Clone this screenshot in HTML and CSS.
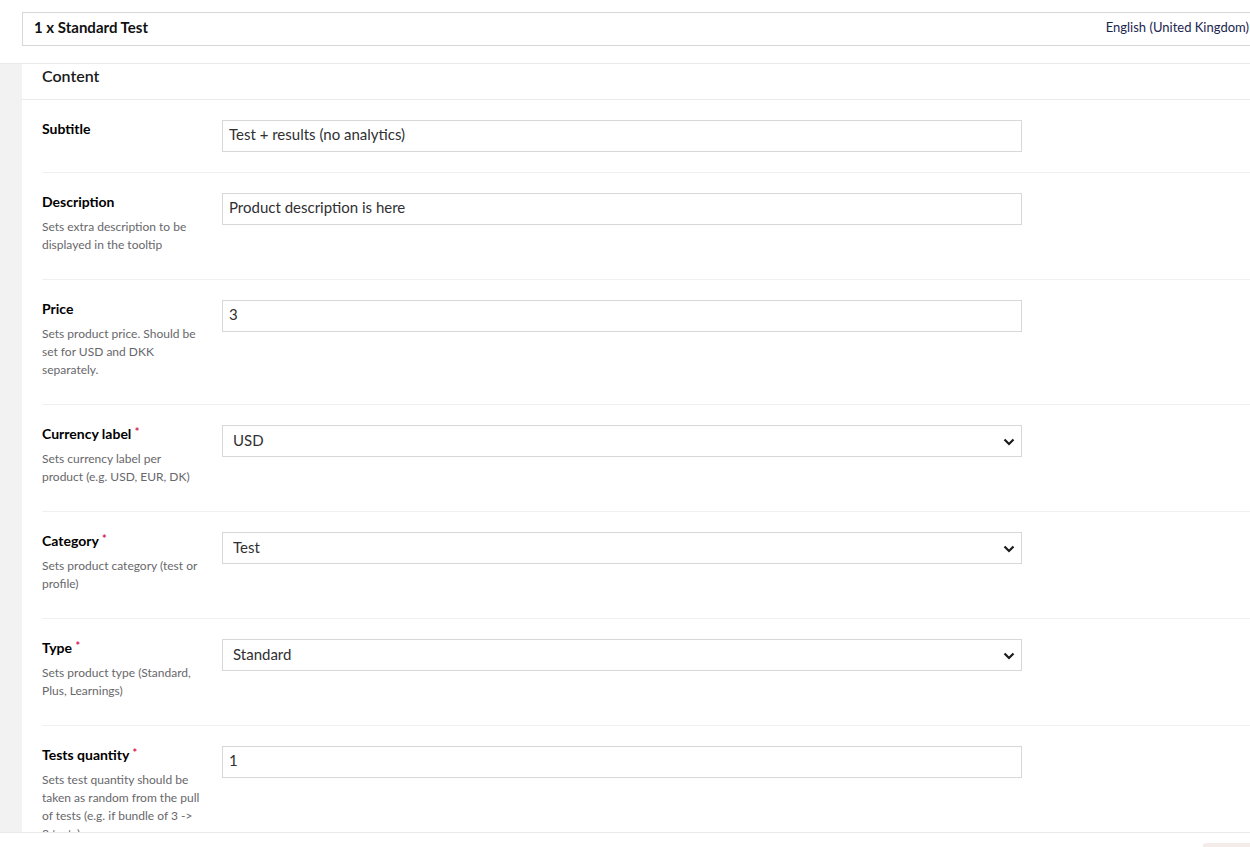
FILE: index.html
```html
<!DOCTYPE html>
<html lang="en">
<head>
    <meta charset="UTF-8">
    <meta name="viewport" content="width=device-width, initial-scale=1.0">
    <title>1 x Standard Test</title>
    <link rel="stylesheet" href="styles.css">
</head>
<body>

    <header class="editor-header">
        <div class="name-box">
            <span class="name">1 x Standard Test</span>
            <span class="culture">English (United Kingdom)</span>
        </div>
    </header>

    <div class="workspace">
        <div class="group-panel">
            <div class="group-title">Content</div>

            <div class="property">
                <div class="property-label">
                    <div class="label">Subtitle</div>
                </div>
                <div class="property-editor">
                    <input class="text-input" type="text" value="Test + results (no analytics)">
                </div>
            </div>

            <div class="property">
                <div class="property-label">
                    <div class="label">Description</div>
                    <div class="help">Sets extra description to be displayed in the tooltip</div>
                </div>
                <div class="property-editor">
                    <input class="text-input" type="text" value="Product description is here">
                </div>
            </div>

            <div class="property">
                <div class="property-label">
                    <div class="label">Price</div>
                    <div class="help">Sets product price. Should be set for USD and DKK separately.</div>
                </div>
                <div class="property-editor">
                    <input class="text-input" type="text" value="3">
                </div>
            </div>

            <div class="property">
                <div class="property-label">
                    <div class="label">Currency label <span class="required">*</span></div>
                    <div class="help">Sets currency label per product (e.g. USD, EUR, DK)</div>
                </div>
                <div class="property-editor">
                    <div class="select-wrap">
                        <select class="select-input">
                            <option>USD</option>
                            <option>DKK</option>
                        </select>
                        <svg class="chevron" width="12" height="8" viewBox="0 0 12 8"><path d="M1.5 1.5 L6 6 L10.5 1.5" fill="none" stroke="#1b1b1b" stroke-width="2.2"/></svg>
                    </div>
                </div>
            </div>

            <div class="property">
                <div class="property-label">
                    <div class="label">Category <span class="required">*</span></div>
                    <div class="help">Sets product category (test or profile)</div>
                </div>
                <div class="property-editor">
                    <div class="select-wrap">
                        <select class="select-input">
                            <option>Test</option>
                            <option>Profile</option>
                        </select>
                        <svg class="chevron" width="12" height="8" viewBox="0 0 12 8"><path d="M1.5 1.5 L6 6 L10.5 1.5" fill="none" stroke="#1b1b1b" stroke-width="2.2"/></svg>
                    </div>
                </div>
            </div>

            <div class="property">
                <div class="property-label">
                    <div class="label">Type <span class="required">*</span></div>
                    <div class="help">Sets product type (Standard, Plus, Learnings)</div>
                </div>
                <div class="property-editor">
                    <div class="select-wrap">
                        <select class="select-input">
                            <option>Standard</option>
                            <option>Plus</option>
                            <option>Learnings</option>
                        </select>
                        <svg class="chevron" width="12" height="8" viewBox="0 0 12 8"><path d="M1.5 1.5 L6 6 L10.5 1.5" fill="none" stroke="#1b1b1b" stroke-width="2.2"/></svg>
                    </div>
                </div>
            </div>

            <div class="property">
                <div class="property-label">
                    <div class="label">Tests quantity <span class="required">*</span></div>
                    <div class="help">Sets test quantity should be taken as random from the pull of tests (e.g. if bundle of 3 -&gt; 3 tests)</div>
                </div>
                <div class="property-editor">
                    <input class="text-input" type="text" value="1">
                </div>
            </div>
        </div>
    </div>

    <footer class="editor-footer">
        <button class="save-button">Save</button>
    </footer>

</body>
</html>
```

FILE: styles.css
```css
html, body {
    overflow: hidden;
}

body {
    margin: 0;
    width: 1250px;
    height: 847px;
    font-family: Lato, "Open Sans", sans-serif;
    background-color: #ffffff;
    color: #1b1b1b;
}

.editor-header {
    height: 64px;
    box-sizing: border-box;
    padding: 12px 0 0 22px;
    border-bottom: 1px solid #e9e9eb;
}

.name-box {
    width: 1240px;
    height: 34px;
    box-sizing: border-box;
    border: 1px solid #d8d7d9;
    display: flex;
    align-items: center;
    justify-content: space-between;
    padding: 0 12px 5px 11px;
}

.name {
    font-size: 15px;
    font-weight: 700;
    color: #111111;
}

.culture {
    font-size: 13px;
    color: #1b264f;
}

.workspace {
    height: 768px;
    overflow: hidden;
    background-color: #f3f2f3; /* faixa cinza à esquerda */
    padding-left: 22px;
}

.group-panel {
    background-color: #ffffff;
    min-height: 100%;
}

.group-title {
    height: 35px;
    line-height: 23px;
    padding-left: 20px;
    font-size: 16px;
    font-weight: 600;
    color: #1b1b1b;
    border-bottom: 1px solid #e9e9eb;
}

.property {
    display: flex;
    gap: 20px;
    margin-left: 20px;
    padding: 20px 0;
    border-bottom: 1px solid #f0f0f2;
}

.property:last-child {
    border-bottom: none;
}

.property-label {
    width: 160px;
    flex-shrink: 0;
    padding-bottom: 5px;
}

.label {
    font-size: 14px;
    font-weight: 700;
    line-height: 17px;
    color: #000000;
}

.required {
    color: #d42054;
    font-size: 11px;
    vertical-align: top;
    position: relative;
    top: -2px;
}

.help {
    margin-top: 8px;
    font-size: 12px;
    line-height: 18px;
    color: #68676b;
}

.property-editor {
    width: 800px;
}

.text-input,
.select-input {
    display: block;
    width: 800px;
    height: 32px;
    box-sizing: border-box;
    border: 1px solid #d8d7d9;
    border-radius: 0;
    background-color: #ffffff;
    font-family: Lato, "Open Sans", sans-serif;
    font-size: 15px;
    color: #303033;
    margin: 0;
    outline: none;
}

.text-input {
    padding: 0 6px 4px 6px;
}

.select-input {
    appearance: none;
    -webkit-appearance: none;
    padding: 0 30px 2px 10px;
}

.select-wrap {
    position: relative;
    width: 800px;
}

.chevron {
    position: absolute;
    right: 7px;
    top: 13px;
    pointer-events: none;
}

.editor-footer {
    height: 52px;
    border-top: 1px solid #e9e9eb;
    background-color: #ffffff;
    display: flex;
    justify-content: flex-end;
    padding: 10px 0 0 0;
    box-sizing: border-box;
}

.save-button {
    width: 80px;
    height: 32px;
    margin-right: -33px;
    border: none;
    border-radius: 3px;
    background-color: #f3ece9;
    color: #1b264f;
    font-family: Lato, "Open Sans", sans-serif;
    font-size: 14px;
    font-weight: 700;
}
```
